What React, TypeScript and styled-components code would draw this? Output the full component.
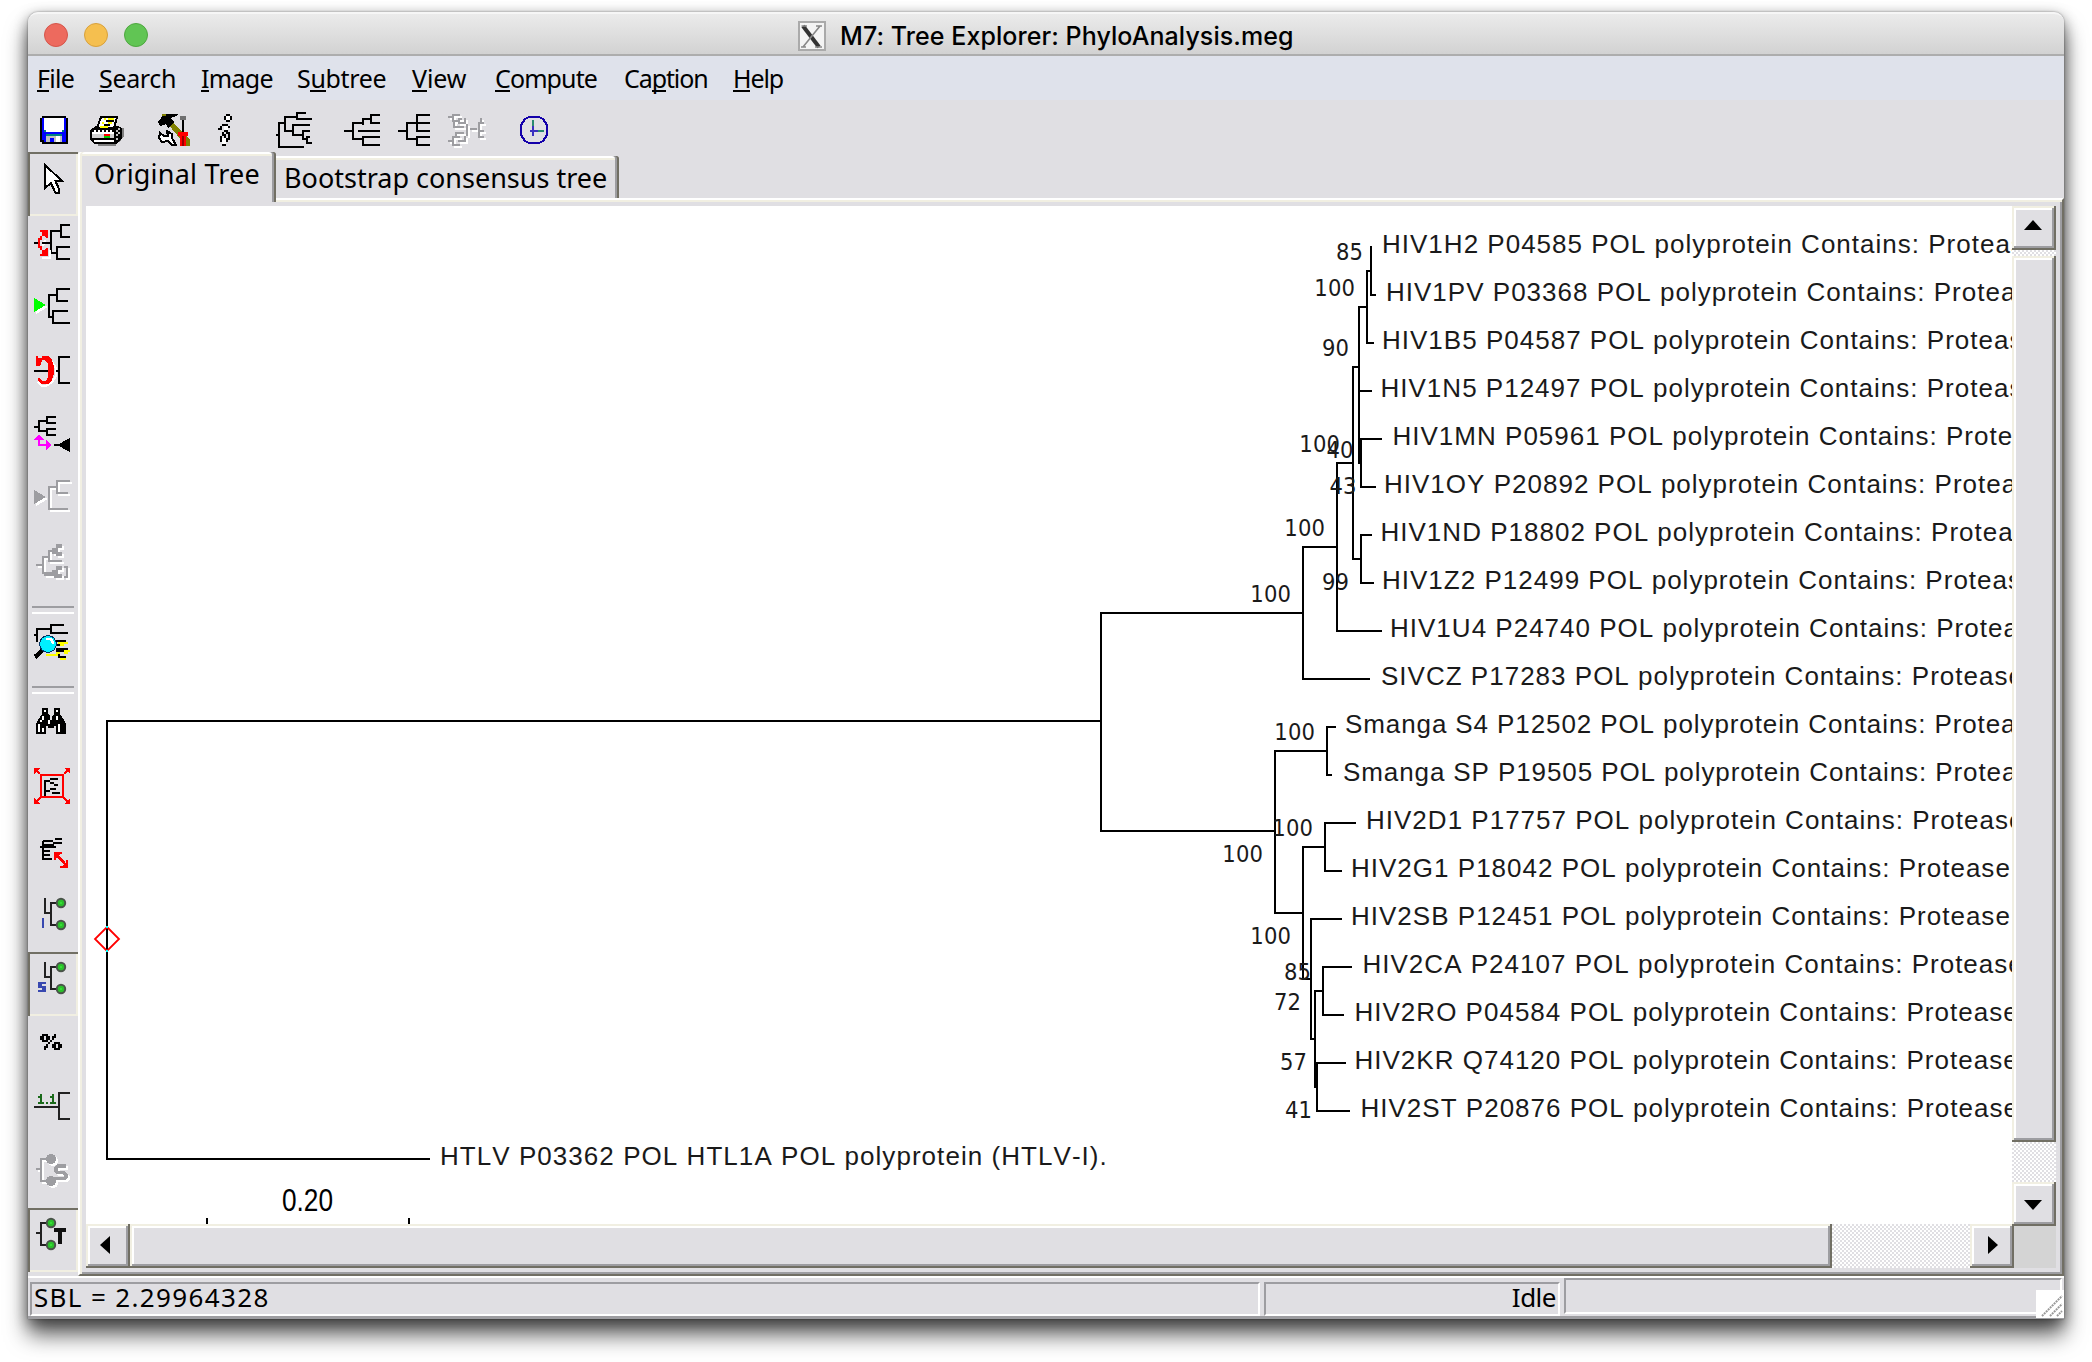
import React from "react";
import styled, { createGlobalStyle, css } from "styled-components";

const face = "#e0dfe3";
const cream = "#f1efe2";
const shade = "#9d9da1";
const dark = "#716f64";
const uiFont = `"Noto Sans", "DejaVu Sans", sans-serif`;

const Global = createGlobalStyle`
  html, body { margin: 0; background: #fff; overflow: hidden; }
  * { box-sizing: border-box; }
  body { height: 1362px; }
`;

const Desktop = styled.div`
  width: 2092px;
  height: 1362px;
  padding: 12px 28px 0;
  background: #fff;
  overflow: hidden;
`;

const Window = styled.div`
  width: 2036px;
  height: 1307px;
  display: flex;
  flex-direction: column;
  background: ${face};
  border-radius: 10px 10px 0 0;
  font-family: ${uiFont};
  color: #000;
  box-shadow: 0 0 2px rgba(0, 0, 0, 0.45), 0 4px 14px rgba(0, 0, 0, 0.42), 0 16px 22px rgba(0, 0, 0, 0.62);
`;

const TitleBar = styled.div`
  height: 44px;
  flex: none;
  display: grid;
  grid-template-columns: 770px auto 1fr;
  align-items: center;
  border-radius: 10px 10px 0 0;
  border-top: 2px solid #f6f6f6;
  border-bottom: 2px solid #adadad;
  background: linear-gradient(#ebebeb, #d2d2d2);
`;

const Lights = styled.div`
  display: flex;
  gap: 16px;
  padding-left: 16px;
`;

const Light = styled.span<{ $fill: string; $rim: string }>`
  width: 24px;
  height: 24px;
  border-radius: 50%;
  background: ${(p) => p.$fill};
  border: 1.5px solid ${(p) => p.$rim};
`;

const Title = styled.div`
  display: flex;
  align-items: center;
  gap: 14px;
  font: 500 25px/38px Inter, Roboto, sans-serif;
  letter-spacing: 0.07px;
  padding-top: 3px;
  white-space: nowrap;
`;

const MenuBar = styled.div`
  height: 44px;
  flex: none;
  display: flex;
  background: #dfe2eb;
`;

const MenuItem = styled.div<{ $width: number; $track?: number }>`
  width: ${(p) => p.$width}px;
  flex: none;
  font-size: 25px;
  line-height: 34px;
  padding-top: 5px;
  letter-spacing: ${(p) => p.$track ?? -0.35}px;
  white-space: nowrap;
  &:first-child { margin-left: 9px; }
`;

const Mnemonic = styled.span`
  display: inline-block;
  height: 31px;
  line-height: 34px;
  border-bottom: 2px solid #000;
  vertical-align: top;
`;

const ToolBar = styled.div`
  height: 52px;
  flex: none;
  display: flex;
  padding: 12px 0 0 12px;
`;

const Tool = styled.div<{ $gap?: number }>`
  margin-left: ${(p) => p.$gap ?? 0}px;
  height: 36px;
  svg { display: block; }
`;

const Body = styled.div`
  flex: none;
  height: 1124px;
  display: flex;
`;

const SideBar = styled.div`
  width: 50px;
  flex: none;
`;

const SideButton = styled.div<{ $down?: boolean }>`
  height: 64px;
  svg { display: block; }
  ${(p) =>
    p.$down &&
    css`
      box-shadow: inset 2px 2px ${dark}, inset -2px -2px ${cream};
    `}
`;

const SideRule = styled.div`
  height: 16px;
  padding: 6px 4px;
  &::before {
    content: "";
    display: block;
    height: 4px;
    border-top: 2px solid ${shade};
    border-bottom: 2px solid #fff;
  }
`;

const Pages = styled.div`
  flex: 1;
  display: flex;
  flex-direction: column;
`;

const TabStrip = styled.div`
  height: 46px;
  flex: none;
  display: flex;
  align-items: flex-end;
`;

const Tab = styled.div<{ $active?: boolean; $track: number }>`
  position: relative;
  white-space: nowrap;
  font-size: 27px;
  letter-spacing: ${(p) => p.$track}px;
  background: ${face};
  box-shadow: inset -2px 0 ${dark}, inset -4px 0 ${shade}, inset 0 2px #fff, inset 0 4px ${cream};
  ${(p) =>
    p.$active
      ? css`
          width: 198px;
          height: 50px;
          margin-bottom: -4px;
          padding-left: 16px;
          line-height: 44px;
          border-radius: 3px 3px 0 0;
          box-shadow: inset 2px 0 #fff, inset 4px 0 ${cream}, inset -2px 0 ${dark}, inset -4px 0 ${shade},
            inset 0 2px #fff, inset 0 4px ${cream};
        `
      : css`
          width: 343px;
          height: 42px;
          padding-left: 8px;
          line-height: 44px;
          border-radius: 0 3px 0 0;
        `}
`;

const Frame = styled.div`
  flex: 1;
  border: 2px solid;
  border-color: #fff ${dark} ${dark} #fff;
  box-shadow: inset 2px 2px ${cream}, inset -2px -2px ${shade};
  padding: 6px;
`;

const ScrollArea = styled.div`
  display: grid;
  grid-template-columns: 1926px 2px 42px;
  grid-template-rows: 1018px 2px 42px;
`;

const Canvas = styled.div`
  grid-area: 1 / 1;
  background: #fff;
  svg { display: block; }
`;

const track = css`
  background: repeating-conic-gradient(${face} 0 25%, #fff 0 50%) 0 0 / 4px 4px;
`;

const VBar = styled.div`
  grid-area: 1 / 2 / 3 / 4;
  display: flex;
  flex-direction: column;
  ${track}
`;

const HBar = styled.div`
  grid-area: 2 / 1 / 4 / 3;
  display: flex;
  ${track}
`;

const Raised = styled.div<{ $w: number; $h: number; $push?: "row" | "column"; $after?: number }>`
  flex: none;
  width: ${(p) => p.$w}px;
  height: ${(p) => p.$h}px;
  background: ${face};
  box-shadow: inset -2px -2px ${dark}, inset 2px 2px ${cream}, inset -4px -4px ${shade}, inset 4px 4px #fff;
  ${(p) => p.$push === "row" && "margin-left: auto;"}
  ${(p) => p.$push === "column" && "margin-top: auto;"}
  ${(p) => p.$after && `margin-bottom: ${p.$after}px;`}
  svg { display: block; }
`;

const Corner = styled.div`
  grid-area: 3 / 3;
  background: #d4d4d4;
`;

const StatusBar = styled.div`
  height: 43px;
  flex: none;
  display: flex;
  position: relative;
  border-top: 2px solid #fff;
  border-bottom: 3px solid ${shade};
  padding: 0 2px;
  gap: 4px;
`;

const StatusCell = styled.div<{ $w: number; $right?: boolean; $high?: boolean; $track?: number }>`
  width: ${(p) => p.$w}px;
  height: ${(p) => (p.$high ? 36 : 34)}px;
  margin-top: ${(p) => (p.$high ? 0 : 4)}px;
  border: 2px solid;
  border-color: ${shade} #fff #fff ${shade};
  padding: 0 2px;
  font-size: 26px;
  line-height: 27px;
  letter-spacing: ${(p) => p.$track ?? 0}px;
  text-align: ${(p) => (p.$right ? "right" : "left")};
  white-space: nowrap;
`;

const Grip = styled.div`
  position: absolute;
  right: 0;
  bottom: -2px;
  width: 28px;
  height: 28px;
  background: #fff;
  svg { display: block; }
`;

/* ---- Pixel icons: one svg unit is two screen pixels ---- */

type GridProps = { w: number; h: number; children: React.ReactNode };
const Grid = ({ w, h, children }: GridProps) => (
  <svg width={w * 2} height={h * 2} viewBox={`0 0 ${w} ${h}`} fill="none" stroke="#000" shapeRendering="crispEdges">
    {children}
  </svg>
);

const Etched = ({ children }: { children: React.ReactNode }) => (
  <>
    <g stroke="#fff" fill="#fff" transform="translate(1 1)">{children}</g>
    <g stroke="#9d9da1" fill="#9d9da1">{children}</g>
  </>
);

const Node = ({ x, y }: { x: number; y: number }) => (
  <g shapeRendering="auto">
    <circle cx={x} cy={y} r="2.1" fill="#2bc02b" stroke="#4a544a" />
    <rect x={x - 0.5} y={y - 0.5} width="1" height="1" fill="#35e035" stroke="none" />
  </g>
);

const SaveIcon = () => (
  <Grid w={14} h={18}>
    <path d="M1 2H13V3H14V16H1V15H0V3H1Z" fill="#000" stroke="none" />
    <path d="M1 3H13V15H2V14H1Z" fill="#0000ff" stroke="none" />
    <path d="M2 3H12V9H11V10H3V9H2Z" fill="#fff" stroke="none" />
    <path d="M2 9H3V10H2ZM11 9H12V10H11ZM3 11H11V12H3Z" fill="#008080" stroke="none" />
    <path d="M3 12H11V15H3Z" fill="#c0c0c0" stroke="none" />
    <path d="M5 13H7V15H5Z" fill="#0000ff" stroke="none" />
    <path d="M8 12H10V15H8Z" fill="#fff" stroke="none" />
  </Grid>
);

const PrintIcon = () => (
  <Grid w={17} h={18}>
    <path d="M4 15H15L17 12V8H16V14H13V17H4Z" fill="#808080" stroke="none" />
    <path d="M0 9L3 7H14L16 8V13L13 16H2L0 14Z" fill="#000" stroke="none" />
    <path d="M5.5 2.5H13.500L12 8H3.500Z" fill="#fff" />
    <path d="M7 3.500H8M9 3.500H12M6 5.500H7M9 5.500H11M5 7.500H9" stroke="#ffff00" />
    <path d="M8 4.500H12M7 6.500H10" stroke="#000" strokeWidth=".8" />
    <path d="M2 9.500H12" stroke="#fff" strokeDasharray="1 1" />
    <path d="M1 10H12V11H1ZM2 14H12V15H2Z" fill="#fff" stroke="none" />
    <path d="M1 11H12V13H1Z" fill="#d0d0d0" stroke="none" />
    <path d="M13.500 9V14M14.500 8V12" stroke="#c0c0c0" strokeDasharray="1 1" />
    <path d="M7 11H10V12H7Z" fill="#f00" stroke="none" />
    <path d="M7 12H10V13H7Z" fill="#0c0" stroke="none" />
  </Grid>
);

const ToolsIcon = () => (
  <Grid w={16} h={18}>
    <path d="M4 3L7 5L16 14V17H14L5 6Z" fill="#808000" stroke="none" />
    <path d="M0 5L3 1H10L9 2L6 3L8 5L5 8L4 6L1 7Z" fill="#000" stroke="none" />
    <path d="M2 1H4V2H2Z" fill="#808000" stroke="none" />
    <path d="M11 2H14V4H13V10H12V4H11Z" fill="#707070" stroke="none" />
    <path d="M12.500 4V10" />
    <path d="M10 10H15V12H14V17H11V12H10Z" fill="#f00" stroke="none" />
    <path d="M12.500 12V17" stroke="#900" />
    <path d="M1 10.500L3 12H5L4.500 9.500L7 11V13L9 16.500H7L5 14.500L2 15L.5 13Z" fill="#fff" />
  </Grid>
);

const InfoIcon = () => (
  <Grid w={7} h={18}>
    <path d="M4 1.500H6M3.500 2V4M6.500 2V4M4 4.500H6" />
    <path d="M4 2H6V4H4ZM3 7H5V9H4V15H3V12H4V9H3ZM2 13H4V16H2Z" fill="#fff" stroke="none" />
    <path d="M2 6.500H5M0 8.500H2M1 7.500H2M5.500 7V8M3 9.500H4M4.500 9V11M2.500 10V12M3.500 11V13M1.500 12V15M5.500 10V13M4.500 13V15M2 16.500H4M5 13.500H6M5 15.500H5" />
  </Grid>
);

const CurvedTreeIcon = () => (
  <Grid w={18} h={18}>
    <path d="M0 11.5H1.500M14 17.500H1.500V5.500H4.500M10 2.500H4.500V9.500H8.500M15 .5H10.500V3.500H18M17 6.500H8.500V11.500H13.500M17 9.500H13.500V13.500H15.500M17 12.500H15.500V15.500H18" />
  </Grid>
);

const FanTreeIcon = () => (
  <Grid w={18} h={18}>
    <path d="M0 9.500H4.500M9.500 5.500H4.500V13.500H9.500M13.500 3.500H9.500V6.500M18 1.500H13.500V5.500H18M9 9.500H18M7 9.500H10M18 12.500H9.500V16.500H18" />
  </Grid>
);

const SquareTreeIcon = () => (
  <Grid w={16} h={18}>
    <path d="M0 9.500H4.500M9.500 5.500H4.500V13.500H9.500M16 1.500H9.500V9.500H16M9.500 5.500H16M16 12.500H9.500V16.500H16" />
  </Grid>
);

const SwapIcon = () => (
  <Grid w={19} h={18}>
    <Etched>
      <path
        fill="none"
        d="M6 1.500H2.500V4.500H6M0 2.500H2M3 4V7.500H8M5 3.500H7M5 5.500H8M0 14.500H2M6 16.500H2.500V12.500H6M4 12V10.500H8M5 14.500H8M8.500 3V6M9.500 6V12M8.500 12V15M11 8.500H14.500M18 5.500H15.500V12.500H18M17 3.500H16.500V6M15 9.500H18"
      />
    </Etched>
  </Grid>
);

const ClockIcon = () => (
  <Grid w={14} h={18}>
    <path d="M4.500 2.500H9.500L11.500 3.500L13.500 6.500V11.500L11.500 14.500L9.500 15.500H4.500L2.500 14.500L.5 11.500V6.500L2.500 3.500Z" stroke="#1400aa" />
    <path d="M6.500 4V12M5 9.500H12" stroke="#3a30c0" />
    <path d="M6.500 4V7M9 9.500H12" stroke="#2a8a70" />
  </Grid>
);

const sideIcons: Record<string, React.ReactNode> = {
  pointer: <path d="M8.500 6.500V18L11.500 15.500L13.700 20.500H15.500V18.500L13.700 14.500H17Z" fill="#fff" />,
  swapSubtree: (
    <>
      <path d="M3 13.500H5M7 13.500H11.500M16.500 7.500H11.500V18.500H14.500M21 4.500H16.500V10.500H21M21 15.500H14.500V21.500H21" />
      <path d="M7 21H11V17M8.500 12L7.500 15" stroke="#fff" />
      <path d="M6 7H10V11H9L8 10H7V8H6ZM6 20H10V16H9L8 17H7V19H6Z" fill="#f00" stroke="none" />
      <path d="M6.500 10V12M5.500 11V16M6.500 15V17" stroke="#f00" />
      <path d="M7 13.500H11.500" />
    </>
  ),
  flipSubtree: (
    <>
      <path d="M4 10L10 13.500L4 17Z" fill="#fff" stroke="none" />
      <path d="M3 9L9 12.500L3 16Z" fill="#0f0" stroke="none" />
      <path d="M14.500 7.500H10.500V18.500H12.500M21 4.500H14.500V10.500H20M20 15.500H12.500V21.500H21" />
    </>
  ),
  reroot: (
    <>
      <path d="M9 7L12 9L14 12V16L12 19L9 21H7L5 19" stroke="#fff" />
      <path d="M4 6H5V7H7V6H10L12 8L13 11V15L12 18L10 20H7L5 18.500V17H6L7 18.500H9L10 16.500V10L8.500 8H7L6.500 10L5.500 11H4Z" fill="#f00" stroke="none" />
      <path d="M3 13.500H10M14 13.500H15.500M21 6.500H15.500V19.500H21" />
    </>
  ),
  compress: (
    <>
      <path d="M3 9.500H5.500M9.500 6.500H5.500V11.500H9.500M14 4.500H9.500V7.500H14M14 10.500H9.500V13.500H14" />
      <path d="M5.500 15V18.500H10" stroke="#f0f" />
      <path d="M3 16L5.500 13L8 16ZM9 16L12 18.500L9 21Z" fill="#f0f" stroke="none" />
      <path d="M13 18.500H16" />
      <path d="M21 15V22L14.500 18.500Z" fill="#000" stroke="none" />
    </>
  ),
  flipOff: (
    <Etched>
      <path d="M3 9L9 12.500L3 16Z" stroke="none" />
      <path d="M14.500 7.500H10.500V18.500H20M21 4.500H14.500V10.500H20" fill="none" />
    </Etched>
  ),
  groupOff: (
    <Etched>
      <path d="M4 14.500H7.500M11 10.500H7.500V18.500H12M13 7.500H10.500V12.500H17" fill="none" />
      <path d="M12 6H14V4H17V6H15V8H17V10H14V9H12ZM12 17H14V15H17V17H15V19H17V21H13V20H8V18H12Z" stroke="none" />
      <path d="M18 15.500H19.500V20.500H18" fill="none" />
    </Etched>
  ),
  zoomTree: (
    <>
      <path d="M18 4.500H11.500V8.500H20M11.500 6.500H4.500V13M3 9.500H5" />
      <path d="M15 13H20V14H18V15H15ZM18 17H21V18H20V19H18ZM9 19H15V20H9ZM16 21H19V22H16ZM14 18H16V19H14Z" fill="#ff0" stroke="none" />
      <path d="M14 12.500H19M14 16.500H20M14 17.500H18M15 19.500H16M15 20.500H19M14 14.500H16" />
      <path d="M8 16.500L3.500 20.500" strokeWidth="2.200" />
      <circle cx="10" cy="14" r="4.200" fill="#00f0ff" stroke="#036" strokeWidth=".5" />
      <path d="M9 11H12L13 13V14H12L11 12H9Z" fill="#fff" stroke="none" />
    </>
  ),
  find: (
    <>
      <path d="M7 6H10V9L11 10V12H12V10L13 9V6H16V9L18 12L19 14V19H14V15H13V16H10V15H9V19H4V14L5 12L7 9Z" fill="#000" stroke="none" />
      <path d="M8 7H9V8H8ZM14 7H15V8H14ZM7 10H8V12H7ZM14 10H15V12H14ZM5 14H6V18H5ZM7 16H8V18H7ZM15 14H16V18H15ZM10 12H11V14H10ZM6 12H7V13H6Z" fill="#fff" stroke="none" />
    </>
  ),
  fit: (
    <>
      <path d="M6.500 7.500H17.500V18.500H6.500ZM4 5L6 7M20 5L18 7M4 21L6 19M20 21L18 19" stroke="#f00" />
      <path d="M3 4H6L3 7ZM21 4H18L21 7ZM3 22H6L3 19ZM21 22H18L21 19Z" fill="#f00" stroke="none" />
      <path d="M8 10.500H11M8.500 10V18M11 9.500H15M11 11.500H13M13 12.500H15M9 15.500H11M11 14.500H14M12 16.500H16" />
    </>
  ),
  resize: (
    <>
      <path d="M7.500 5.500V14.500M7.500 5.500H12.500M12.500 6.500H17M13.500 4.500H17M6 8.500H14M7 7.500H13M7 10.500H11M7 12.500H11M7 14.500H12" transform="translate(0 3)" />
      <path d="M14.500 15.500L19 20.500" stroke="#f00" strokeWidth="1.300" />
      <path d="M13 14H17V15H16L14 17V18H13ZM20 22H16V21H17L19 19V18H20Z" fill="#f00" stroke="none" />
    </>
  ),
  lineNode: (
    <>
      <path d="M8.500 5V12.500H11.500M15 7.500H11.500V18.500H15" stroke="#222" />
      <Node x={16.5} y={7.5} /><Node x={16.5} y={18.5} />
      <path d="M7.500 15V20" stroke="#3848b0" />
    </>
  ),
  sNode: (
    <>
      <path d="M8.500 5V12.500H11.500M15 7.500H11.500V18.500H15" stroke="#222" />
      <Node x={16.5} y={7.5} /><Node x={16.5} y={18.5} />
      <path d="M5 15H9V16H7V17H9V20H5V19H7V18H5Z" fill="#3848b0" stroke="none" />
    </>
  ),
  percent: (
    <g fill="#000" stroke="none">
      <path fillRule="evenodd" d="M7 9H10V10H11V12H10V13H7V12H6V10H7ZM8 10V12H9V10ZM13 13H16V14H17V16H16V17H13V16H12V14H13ZM14 14V16H15V14Z" />
      <path d="M13 9H14V11H13V12H12V13H11V14H10V16H9V17H8V15H9V14H10V13H11V12H12V10H13Z" />
    </g>
  ),
  lengths: (
    <>
      <path d="M3 13.500H15.500M21 6.500H15.500V19.500H21" stroke="#222" />
      <path d="M5 8.500H6.500V11.500M5 11.500H8M11 8.500H12.500V11.500M11 11.500H14M6.500 7V12M12.500 7V12M9 11.500H10" stroke="#1a6a1a" />
    </>
  ),
  sOff: (
    <Etched>
      <path d="M4 12.500H6.500M10 7.500H6.500V18.500H10" fill="none" />
      <circle cx="11.500" cy="7.500" r="2" /><circle cx="11.500" cy="18.500" r="2" />
      <path d="M19 11H15L14 12V13.500L15 14.300H18L19 15.500V16.500L18 17.300H13.500" fill="none" strokeWidth="1.800" />
    </Etched>
  ),
  tNode: (
    <>
      <path d="M4 12.500H6.500M10 7.500H6.500V18.500H10" stroke="#222" />
      <Node x={11.5} y={7.5} /><Node x={11.5} y={18.5} />
      <path d="M13 10H19V12H17V18H15V12H13Z" fill="#111" stroke="none" />
    </>
  ),
};

const SideItem = ({ icon, down }: { icon: string; down?: boolean }) => (
  <SideButton $down={down}>
    <Grid w={25} h={32}>{sideIcons[icon]}</Grid>
  </SideButton>
);

const Arrow = ({ dir }: { dir: "up" | "down" | "left" | "right" }) => {
  const d = {
    up: "M12 24L21 14L30 24Z",
    down: "M12 18L21 28L30 18Z",
    left: "M24 12L14 21L24 30Z",
    right: "M18 12L28 21L18 30Z",
  }[dir];
  return (
    <svg width="44" height="44" viewBox="0 0 44 44"><path d={d} /></svg>
  );
};

/* ---- Tree data ---- */

const tail = " POL polyprotein Contains: Protease";
const taxa: [number, number, string][] = [
  [1382, 0, "HIV1H2 P04585"],
  [1386, 1, "HIV1PV P03368"],
  [1382, 2, "HIV1B5 P04587"],
  [1380.5, 3, "HIV1N5 P12497"],
  [1392.5, 4, "HIV1MN P05961"],
  [1384, 5, "HIV1OY P20892"],
  [1380.5, 6, "HIV1ND P18802"],
  [1382, 7, "HIV1Z2 P12499"],
  [1390, 8, "HIV1U4 P24740"],
  [1381, 9, "SIVCZ P17283"],
  [1345, 10, "Smanga S4 P12502"],
  [1343, 11, "Smanga SP P19505"],
  [1366, 12, "HIV2D1 P17757"],
  [1351, 13, "HIV2G1 P18042"],
  [1351, 14, "HIV2SB P12451"],
  [1362.5, 15, "HIV2CA P24107"],
  [1354.5, 16, "HIV2RO P04584"],
  [1354.5, 17, "HIV2KR Q74120"],
  [1360.5, 18, "HIV2ST P20876"],
];

const support: [number, number, string][] = [
  [1363, 260, "85"], [1355, 296, "100"], [1349, 356, "90"], [1340, 452, "100"],
  [1353.5, 458, "40"], [1356.5, 494, "43"], [1325, 536, "100"], [1349, 590, "99"],
  [1291, 602, "100"], [1315, 740, "100"], [1313, 836, "100"], [1263, 862, "100"],
  [1291, 944, "100"], [1311, 980, "85"], [1301, 1010, "72"], [1307, 1070, "57"], [1312, 1118, "41"],
];

const branches =
  "M1101 721H107V1159H430M1303 613H1101V831H1275" +
  "M1337 547H1303V679H1370M1353 463H1337V631H1382M1359 367H1353V559H1361" +
  "M1372 535H1361V583H1374M1367 307H1359V463H1361M1359 391H1372M1382 439H1361V487H1376" +
  "M1371 271H1367V343H1374M1371 246V295H1376" +
  "M1327 751H1275V913H1303M1336 727H1327V775H1332" +
  "M1325 847H1303V979H1311M1356 823H1325V871H1342" +
  "M1342 919H1311V1039H1315M1323 991H1315V1087H1317" +
  "M1352 967H1323V1015H1344M1346 1063H1317V1111H1350";

const Taxon = styled.text<{ $track?: number }>`
  font: 26px "Liberation Sans", Arial, sans-serif;
  fill: #1a1a1a;
  letter-spacing: ${(p) => p.$track ?? 1.01}px;
  font-kerning: none;
`;

const Support = styled.text`
  font: 23.5px "DejaVu Sans Condensed", "DejaVu Sans", sans-serif;
  font-stretch: condensed;
  fill: #1a1a1a;
  letter-spacing: 0.1px;
  text-anchor: end;
`;

const ScaleLabel = styled.text`
  font: 32px "Liberation Sans", Arial, sans-serif;
`;

const Tree = () => (
  <svg width="1926" height="1018" viewBox="86 206 1926 1018">
    <path d={branches} fill="none" stroke="#000" strokeWidth="2" strokeLinecap="butt" />
    {taxa.map(([x, row, name]) => (
      <Taxon key={name} x={x} y={253 + row * 48} $track={name.startsWith("Smanga") ? 0.9 : undefined}>
        {name + tail}
      </Taxon>
    ))}
    <Taxon x="440" y="1165" $track={1.05}>HTLV P03362 POL HTL1A POL polyprotein (HTLV-I).</Taxon>
    {support.map(([x, y, n]) => (
      <Support key={`${x}-${y}`} x={x} y={y}>{n}</Support>
    ))}
    <ScaleLabel x="282" y="1211" textLength="51" lengthAdjust="spacingAndGlyphs">0.20</ScaleLabel>
    <path d="M207 1218V1224M409 1218V1224" stroke="#000" strokeWidth="2" />
    <path d="M107 927L119 939L107 951L95 939Z" fill="none" stroke="#f00" strokeWidth="1.800" />
    <path d="M106 926H108V928H106ZM106 950H108V952H106Z" fill="#0ff" />
  </svg>
);

export default function App() {
  return (
    <Desktop>
      <Global />
      <Window>
        <TitleBar>
          <Lights>
            <Light $fill="#ed6a5e" $rim="#d5554a" />
            <Light $fill="#f5bf4f" $rim="#d8a13c" />
            <Light $fill="#61c554" $rim="#4ea73f" />
          </Lights>
          <Title>
            <svg width="28" height="30" viewBox="0 0 28 30">
              <rect x="1" y="1" width="26" height="28" fill="#f4f4f4" stroke="#aaa" strokeWidth="2" />
              <path d="M5 5L21 26" stroke="#333" strokeWidth="4" />
              <path d="M22 5L5 26M3.500 5H9M18 5H24M3 26H8M17 26H24" stroke="#888" strokeWidth="1.600" />
            </svg>
            M7: Tree Explorer: PhyloAnalysis.meg
          </Title>
        </TitleBar>
        <MenuBar>
          <MenuItem $width={62} $track={-0.7}><Mnemonic>F</Mnemonic>ile</MenuItem>
          <MenuItem $width={102}><Mnemonic>S</Mnemonic>earch</MenuItem>
          <MenuItem $width={96} $track={-0.7}><Mnemonic>I</Mnemonic>mage</MenuItem>
          <MenuItem $width={115}>S<Mnemonic>u</Mnemonic>btree</MenuItem>
          <MenuItem $width={83} $track={-0.1}><Mnemonic>V</Mnemonic>iew</MenuItem>
          <MenuItem $width={129} $track={-0.9}><Mnemonic>C</Mnemonic>ompute</MenuItem>
          <MenuItem $width={109} $track={-1.1}>Ca<Mnemonic>p</Mnemonic>tion</MenuItem>
          <MenuItem $width={70} $track={-1.1}><Mnemonic>H</Mnemonic>elp</MenuItem>
        </MenuBar>
        <ToolBar>
          <Tool><SaveIcon /></Tool>
          <Tool $gap={22}><PrintIcon /></Tool>
          <Tool $gap={34}><ToolsIcon /></Tool>
          <Tool $gap={28}><InfoIcon /></Tool>
          <Tool $gap={44}><CurvedTreeIcon /></Tool>
          <Tool $gap={32}><FanTreeIcon /></Tool>
          <Tool $gap={18}><SquareTreeIcon /></Tool>
          <Tool $gap={18}><SwapIcon /></Tool>
          <Tool $gap={34}><ClockIcon /></Tool>
        </ToolBar>
        <Body>
          <SideBar>
            <SideItem icon="pointer" down />
            <SideItem icon="swapSubtree" />
            <SideItem icon="flipSubtree" />
            <SideItem icon="reroot" />
            <SideItem icon="compress" />
            <SideItem icon="flipOff" />
            <SideItem icon="groupOff" />
            <SideRule />
            <SideItem icon="zoomTree" />
            <SideRule />
            <SideItem icon="find" />
            <SideItem icon="fit" />
            <SideItem icon="resize" />
            <SideItem icon="lineNode" />
            <SideItem icon="sNode" down />
            <SideItem icon="percent" />
            <SideItem icon="lengths" />
            <SideItem icon="sOff" />
            <SideItem icon="tNode" down />
          </SideBar>
          <Pages>
            <TabStrip>
              <Tab $active $track={0.2}>Original Tree</Tab>
              <Tab $track={0}>Bootstrap consensus tree</Tab>
            </TabStrip>
            <Frame>
              <ScrollArea>
                <Canvas><Tree /></Canvas>
                <VBar>
                  <Raised $w={44} $h={44} $after={6}><Arrow dir="up" /></Raised>
                  <Raised $w={44} $h={886} />
                  <Raised $w={44} $h={44} $push="column"><Arrow dir="down" /></Raised>
                </VBar>
                <HBar>
                  <Raised $w={44} $h={44}><Arrow dir="left" /></Raised>
                  <Raised $w={1702} $h={44} />
                  <Raised $w={44} $h={44} $push="row"><Arrow dir="right" /></Raised>
                </HBar>
                <Corner />
              </ScrollArea>
            </Frame>
          </Pages>
        </Body>
        <StatusBar>
          <StatusCell $w={1230} $track={1.35}>SBL = 2.29964328</StatusCell>
          <StatusCell $w={296} $right $track={-0.5}>Idle</StatusCell>
          <StatusCell $w={498} $high />
          <Grip>
            <svg width="28" height="28" viewBox="0 0 28 28">
              <path d="M6 26L26 6M14 26L26 14M21 26L26 21" stroke="#999" strokeWidth="2" strokeDasharray="2 .8" />
            </svg>
          </Grip>
        </StatusBar>
      </Window>
    </Desktop>
  );
}
